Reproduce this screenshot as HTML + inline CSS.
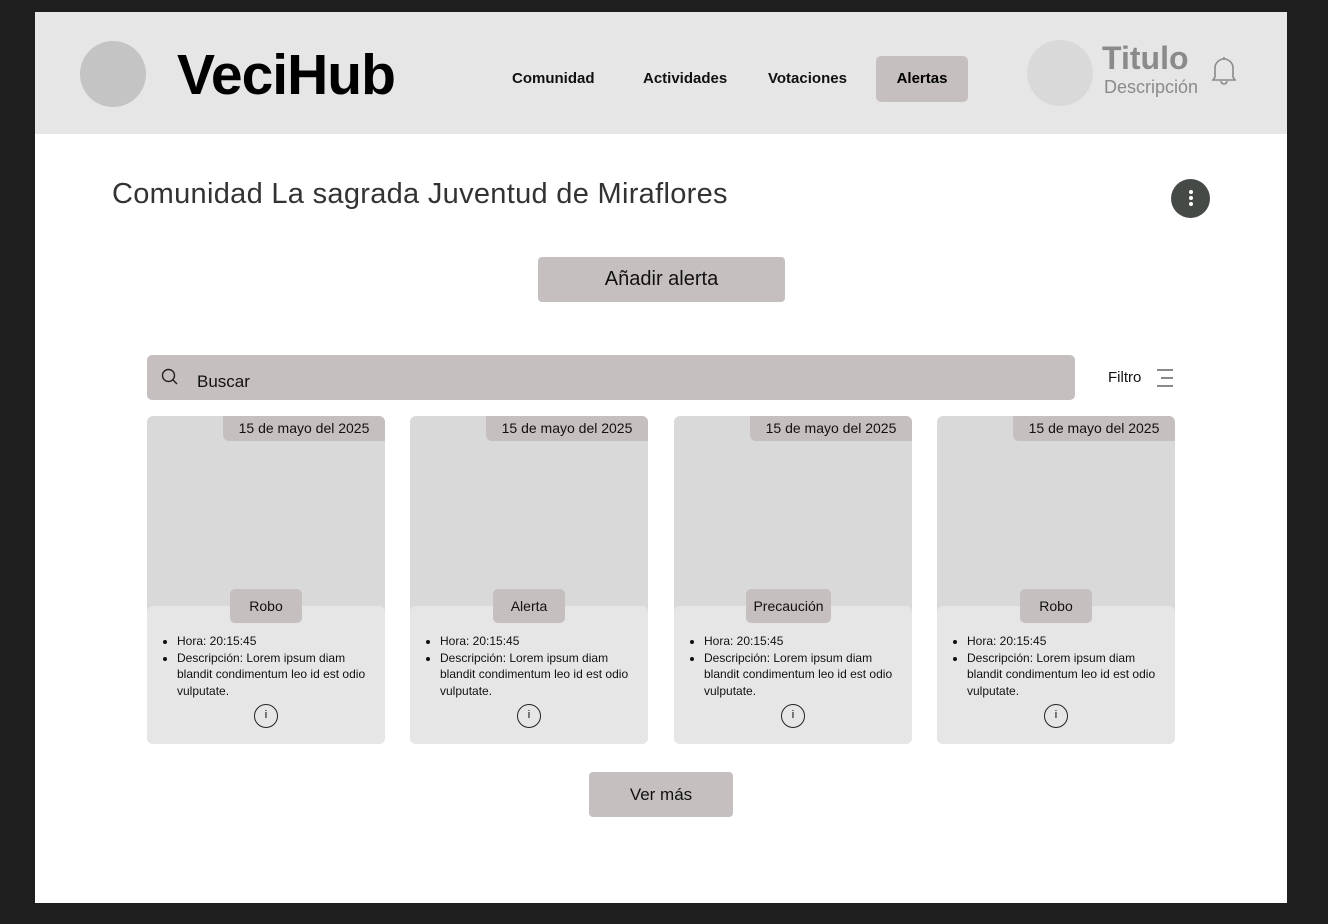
<!DOCTYPE html>
<html><head><meta charset="utf-8"><style>
*{margin:0;padding:0;box-sizing:border-box}
body{width:1328px;height:924px;background:#1e1e1e;font-family:"Liberation Sans",sans-serif;position:relative;overflow:hidden}
.page{position:absolute;left:35px;top:12px;width:1252px;height:891px;background:#fff}
.hdr{position:absolute;left:0;top:0;width:1252px;height:122px;background:#e6e6e6}
.abs{position:absolute}
.nav{position:absolute;top:58px;font-size:15px;font-weight:bold;color:#111}
.card{position:absolute;top:416px;width:238px;height:328px;background:#d9d9d9;border-radius:6px;overflow:hidden}
.card .date{position:absolute;right:0;top:0;width:162px;height:25px;background:#c6bfbf;font-size:14px;text-align:center;line-height:24px;color:#111;border-radius:0 0 0 6px}
.card .bot{position:absolute;left:0;top:190px;width:238px;height:138px;background:#e6e6e6;border-radius:6px}
.card .tag{position:absolute;top:173px;height:34px;background:#c6bfbf;border-radius:5px;font-size:14px;line-height:34px;text-align:center;color:#111}
.card ul{position:absolute;left:30px;top:217px;width:205px;font-size:12px;line-height:16.5px;color:#111}
.card .i{position:absolute;left:107px;top:288px;width:24px;height:24px;border:1.3px solid #222;border-radius:50%;font-size:11px;text-align:center;line-height:21px}
</style></head><body>
<div class="page">
<div class="hdr">
<div class="abs" style="left:45px;top:29px;width:66px;height:66px;border-radius:50%;background:#c4c4c4"></div>
<div class="abs" style="left:142px;top:30px;font-size:57px;font-weight:bold;color:#000;letter-spacing:-1px">VeciHub</div>
<div class="nav" style="left:477px">Comunidad</div>
<div class="nav" style="left:608px">Actividades</div>
<div class="nav" style="left:733px">Votaciones</div>
<div class="abs" style="left:841px;top:44px;width:92px;height:46px;background:#c6bfbf;border-radius:5px;font-size:15px;font-weight:bold;text-align:center;line-height:46px">Alertas</div>
<div class="abs" style="left:992px;top:28px;width:66px;height:66px;border-radius:50%;background:#d9d9d9"></div>
<div class="abs" style="left:1067px;top:28px;font-size:32px;font-weight:bold;color:#8a8a8a">Titulo</div>
<div class="abs" style="left:1069px;top:65px;font-size:18px;color:#8a8a8a">Descripción</div>
<svg class="abs" style="left:1176px;top:42px" width="26" height="32" viewBox="0 0 26 32" fill="none" stroke="#8a8a8a" stroke-width="1.6"><path d="M4 23V14a9 9 0 0 1 18 0v9l2 3H2z"/><path d="M13 3v2M10 27a3 3 0 0 0 6 0"/></svg>
</div>
<div class="abs" style="left:77px;top:166px;font-size:29px;color:#333;letter-spacing:0.3px">Comunidad La sagrada Juventud de Miraflores</div>
<div class="abs" style="left:1136px;top:167px;width:39px;height:39px;border-radius:50%;background:#464a46">
<div style="position:absolute;left:18px;top:11px;width:4px;height:4px;border-radius:50%;background:#fff;box-shadow:0 6px 0 #fff,0 12px 0 #fff"></div></div>
<div class="abs" style="left:503px;top:245px;width:247px;height:45px;background:#c6bfbf;border-radius:4px;font-size:20px;text-align:center;line-height:44px;color:#111">Añadir alerta</div>
<div class="abs" style="left:112px;top:343px;width:928px;height:45px;background:#c6bfbf;border-radius:5px">
<svg class="abs" style="left:14px;top:13px" width="18" height="18" viewBox="0 0 18 18" fill="none" stroke="#222" stroke-width="1.4"><circle cx="7.5" cy="7.5" r="6"/><path d="M12 12l4 4"/></svg>
<div class="abs" style="left:50px;top:17px;font-size:17px;color:#111">Buscar</div></div>
<div class="abs" style="left:1073px;top:357px;font-size:15px;color:#111">Filtro</div>
<svg class="abs" style="left:1121px;top:357px" width="18" height="18" viewBox="0 0 18 18" stroke="#444" stroke-width="1.2"><path d="M1 1h16M5 9h12M1 17h16"/></svg>
</div>
<div class="card" style="left:147px"><div class="date">15 de mayo del 2025</div><div class="bot"></div><div class="tag" style="left:83px;width:72px">Robo</div><ul><li>Hora: 20:15:45</li><li>Descripción: Lorem ipsum diam blandit condimentum leo id est odio vulputate.</li></ul><div class="i">i</div></div>
<div class="card" style="left:410px"><div class="date">15 de mayo del 2025</div><div class="bot"></div><div class="tag" style="left:83px;width:72px">Alerta</div><ul><li>Hora: 20:15:45</li><li>Descripción: Lorem ipsum diam blandit condimentum leo id est odio vulputate.</li></ul><div class="i">i</div></div>
<div class="card" style="left:674px"><div class="date">15 de mayo del 2025</div><div class="bot"></div><div class="tag" style="left:72px;width:85px">Precaución</div><ul><li>Hora: 20:15:45</li><li>Descripción: Lorem ipsum diam blandit condimentum leo id est odio vulputate.</li></ul><div class="i">i</div></div>
<div class="card" style="left:937px"><div class="date">15 de mayo del 2025</div><div class="bot"></div><div class="tag" style="left:83px;width:72px">Robo</div><ul><li>Hora: 20:15:45</li><li>Descripción: Lorem ipsum diam blandit condimentum leo id est odio vulputate.</li></ul><div class="i">i</div></div>
<div class="abs" style="left:589px;top:772px;width:144px;height:45px;background:#c6bfbf;border-radius:4px;font-size:17px;text-align:center;line-height:46px;color:#111">Ver más</div>
</body></html>
